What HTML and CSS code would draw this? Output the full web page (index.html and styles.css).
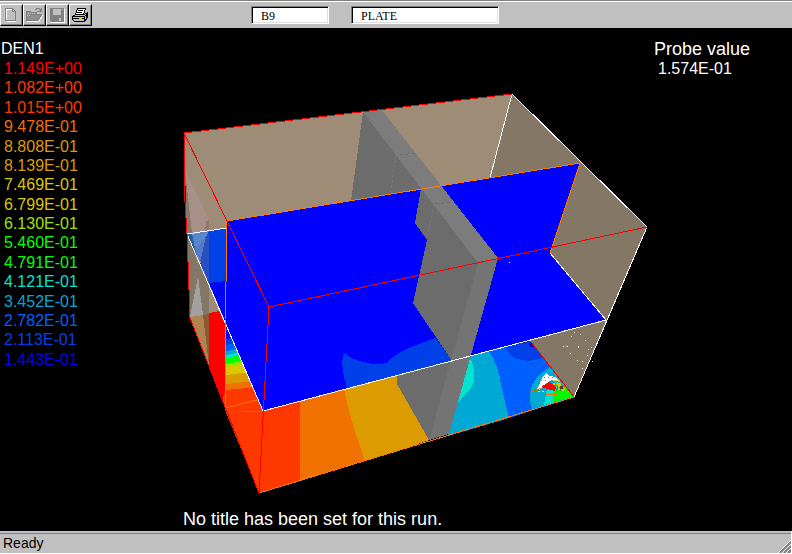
FILE: index.html
```html
<!DOCTYPE html>
<html lang="en">
<head>
<meta charset="utf-8">
<title>DEN1 viewer</title>
<link rel="stylesheet" href="styles.css">
</head>
<body>
<header class="toolbar">
  <div class="buttons">
    <button class="tool" type="button" aria-label="New"><svg viewBox="0 0 18 16"><path fill="#fff" d="M5 2h7v1h1v1h1v11H5v-1h8V5h-3V2z"/><path fill="none" stroke="#808080" d="M3.5 1.5h7l3 3v9h-10zM10.500 1.500v3h3"/><path stroke="#fff" fill="none" d="M4.500 13V2.500H10"/></svg></button>
    <button class="tool" type="button" aria-label="Open"><svg viewBox="0 0 18 16"><path fill="#fff" d="M2 14h12l4-7v1l-4 7H2z"/><path fill="#909090" d="M1 4h4l1 1h6v3h5l-4 6H1z"/><path fill="none" stroke="#808080" d="M1.500 13.500v-9h4l1 1h5v2M1.500 13.500l4-6h11l-4 6zM10 2.500h1v-1h3v1h1v2m-3 0h4V1"/><path stroke="#c0c0c0" stroke-dasharray="1 1" d="M3 6.500h8M2 8.500h3"/></svg></button>
    <button class="tool" type="button" aria-label="Save"><svg viewBox="0 0 18 16"><path fill="#fff" d="M3 15h13V2h1v14H3z"/><path fill="#808080" d="M2 1h14v14H3l-1-1z"/><path fill="#c0c0c0" d="M5 2h8v6H5zM11 11h2v3h-2zM14 2h1v1h-1z"/></svg></button>
    <button class="tool" type="button" aria-label="Print"><svg viewBox="0 0 18 16"><path fill="#fff" stroke="#000" d="M6.500 1.500h8l-2 6h-8z"/><path stroke="#000" d="M7 3.500h5M6 5.500h5"/><path fill="#c0c0c0" stroke="#000" d="M1.500 9.500l3-2h9l3-2v5l-3 4h-10l-2-2zM1.500 9.500h12v5M13.500 9.500l3-3M2 11.500h12"/><path stroke="#e0d000" stroke-width="2" d="M8 12h3"/><path stroke="#000" d="M15.500 7v5"/></svg></button>
  </div>
  <input class="field field-cell" aria-label="Cell" value="B9">
  <input class="field field-object" aria-label="Object" value="PLATE">
</header>

<main class="viewer">
  <section class="legend">
    <h1 class="label">DEN1</h1>
    <ol class="scale">
      <li class="c1">1.149E+00</li><li class="c2">1.082E+00</li><li class="c2">1.015E+00</li><li class="c3">9.478E-01</li>
      <li class="c4">8.808E-01</li><li class="c4">8.139E-01</li><li class="c5">7.469E-01</li><li class="c5">6.799E-01</li>
      <li class="c6">6.130E-01</li><li class="c7">5.460E-01</li><li class="c7">4.791E-01</li><li class="c8">4.121E-01</li>
      <li class="c9">3.452E-01</li><li class="c10">2.782E-01</li><li class="c11">2.113E-01</li><li class="c12">1.443E-01</li>
    </ol>
  </section>

  <figure class="plot">
    <svg class="scene" viewBox="180 90 470 410" shape-rendering="crispEdges" role="img" aria-label="Contour plot in a box">
      <defs><clipPath id="strip"><path d="M226 325L263 411L226 412z"/></clipPath></defs>
      <!-- walls -->
      <path fill="#9f8c77" d="M184 133L512 94L490 178L227 221V330L190 318L187 235z"/>
      <path fill="#857766" d="M512 94L647 227L574 397L530 342L480 250L490 178z"/>
      <!-- floor bands -->
      <path fill="#ff3800" d="M225 390L250 384L263 405L301 401V481L259 493L225 410z"/>
      <path fill="#f07000" d="M300 400L345 389L351 414L365 461L300 481z"/>
      <path fill="#dc9c00" d="M344 389L398 374L430 440L365 461Q350 420 344 389z"/>
      <path fill="#00a8d4" d="M470 357L489 350Q499 367 501 385L509 418L448 436z"/>
      <path fill="#00e4d0" d="M469 357Q475 365 474 380Q473 388 467 392L455 406z"/>
      <path fill="#0060ff" d="M489 351L531 341L574 397L509 418L501 385Q499 367 489 351z"/>
      <path fill="#0040e8" d="M506 347L531 341L543 358Q529 363 518 359Q509 357 506 347z"/>
      <path fill="#0000e8" d="M529 343h3l3 4h-5z"/>
      <path fill="#00a8d4" d="M550 367Q538 374 532 385Q528 397 532 409L574 397z"/>
      <path fill="#00e4d0" d="M546 391L557 386L553 403L544 405L546 395z"/>
      <path fill="#00f800" d="M553 402V393L565 385L574 397z"/>
      <path fill="#fff" d="M537 389L543 376L547 373L549 376L556 377L558 380L550 380L547 383L542 387L539 391z"/>
      <path stroke="#00a8d4" stroke-dasharray="1 3" d="M544 377.500h12M541 380.500h8"/>
      <path fill="#f00" d="M541 387L549 382L553 384L556 388L555 391L547 389z"/>
      <path stroke="#fff" stroke-dasharray="2 2" d="M538 391.500h8M549 380.500h12"/>
      <path stroke="#dcc800" stroke-width="2" stroke-dasharray="2 1" d="M555 380l9 11M553 384h8M558 389h7M559 380v7"/>
      <path stroke="#f07000" stroke-dasharray="3 1" d="M532 390.500h6M539 388.500h4M546 394.500h12M562 386.500h4"/>
      <path stroke="#0a0" stroke-width="2" stroke-dasharray="1 3" d="M534 390h5M556 390h8"/>
      <path fill="#404040" d="M560 386h3v3h-3z"/>
      <!-- left opening -->
      <path fill="#857766" d="M187 234L209 283V367L190 318z"/>
      <path fill="#9f8c77" d="M209 283L221 312L209 314z"/>
      <path fill="#a0a0a0" d="M198 276L190 317L203 315z"/>
      <path fill="#b08450" d="M190 317L203 315L209 352V365z"/>
      <path fill="#8c5c30" d="M203 315L209 314V365z"/>
      <path fill="#f00" d="M209 313L219 311L226 326V407L224 402L209 367z"/>
      <path fill="#ff3800" d="M226 389L222 400L226 408z"/>
      <g clip-path="url(#strip)">
        <path fill="#0000ff" d="M226 320h40v30h-40z"/>
        <path fill="#0040e8" d="M226 339l40-7v90h-40z"/>
        <path fill="#0060ff" d="M226 345l40-8v90h-40z"/>
        <path fill="#00a8d4" d="M226 351l40-8v90h-40z"/>
        <path fill="#00e4d0" d="M226 355l40-8v90h-40z"/>
        <path fill="#00ff00" d="M226 358l40-9v90h-40z"/>
        <path fill="#a0e000" d="M226 364l40-7v90h-40z"/>
        <path fill="#dcc800" d="M226 367l40-7v90h-40z"/>
        <path fill="#dc9c00" d="M226 375l40-5v90h-40z"/>
        <path fill="#f07000" d="M226 384l40-4v90h-40z"/>
        <path fill="#ff3800" d="M226 390l40-4v90h-40z"/>
      </g>
      <!-- cutting plane -->
      <path fill="#0000ff" d="M227 221L580 163L550 253L606 320L263 411L209 283V231L227 228z"/>
      <path fill="#0040e8" d="M187 234L226 228V281L209 283z"/>
      <path fill="#0040e8" d="M345 353Q350 360 368 363Q378 365 386 363Q398 350 436 338L452 361L348 389Q340 370 343 355z"/>
      <!-- inlet tint -->
      <path fill="#a89088" d="M185 170L209 220V232L192 234z"/>
      <path fill="#857766" d="M185 170L192 234H187z"/>
      <path fill="#2060a8" d="M187 234L193 233L196 247V254z"/>
      <path fill="#5888cc" d="M192 234L209 231L203 242L195 248z"/>
      <path fill="#5878c8" d="M195 248L206 237L201 262L197 256z"/>
      <path fill="#2850c0" d="M206 237L209 232V283L200 262z"/>
      <path fill="#94786c" d="M206 221L209 220V231L205 232z"/>
      <path fill="#a08880" d="M197 256L201 262L199 266L196 257z"/>
      <!-- plate -->
      <path fill="#6c6c6c" d="M363 112L351 201L422 189z"/>
      <path fill="#6c6c6c" d="M421 188L415 223L427 240L413 303L452 361L397 376V384L429 440L480 262z"/>
      <path fill="#7c7c7c" d="M363 112L381 109L498 258L478 263z"/>
      <path fill="#747474" d="M478 263L498 258L449 434L429 440z"/>
      <path fill="none" stroke="#777" stroke-dasharray="3 2" d="M396 155L390 195M434 205L427 239"/>
      <path fill="none" stroke="#6c6c6c" stroke-dasharray="3 3" d="M400 155l16-2M435 204l16-2"/>
      <!-- edges -->
      <path class="edge white" d="M512 94L490 178M512 94L647 227L574 397M550 253L606 320L263 411L187 234L227 228"/>
      <path class="edge orange" d="M227 221L580 163L550 253M226 221V282L225 320V408L257 400M259 493L574 397"/>
      <path class="edge red" d="M184 133L512 94"/>
      <path class="edge red" d="M184 133L185 202L187 234L190 318L259 493L269 307L647 227M184 133L227 221L269 307M531 342L574 397"/>
      <g fill="#fff"><path d="M509 262h1v1h-1zM571 336h1v1h-1zM574 332h1v1h-1zM580 334h1v1h-1zM585 340h1v1h-1zM578 346h1v2h-1zM591 347h1v1h-1zM588 349h1v1h-1zM570 353h1v1h-1zM577 360h1v1h-1zM582 361h1v1h-1zM592 361h1v1h-1zM587 355h1v1h-1zM582 368h1v1h-1zM566 346h2v1h-2zM563 346h1v1h-1z"/></g>
    </svg>
    <figcaption class="label">No title has been set for this run.</figcaption>
  </figure>

  <section class="probe label">
    <div>Probe value</div>
    <div class="probe-value">1.574E-01</div>
  </section>
</main>

<footer class="status">
  <span>Ready</span>
  <svg class="grip" viewBox="0 0 13 13"><path stroke="#fff" d="M0 13L13 0M4 13L13 4M8 13L13 8"/><path stroke="#808080" stroke-width="2" d="M2 13L13 2M6 13L13 6M10 13L13 10"/></svg>
</footer>
</body>
</html>
```
FILE: styles.css
```css
* { box-sizing: border-box; }

body {
  margin: 0;
  min-height: 100vh;
  display: flex;
  flex-direction: column;
  background: #000;
  color: #fff;
  font: 16px/20px "Liberation Sans", Arial, sans-serif;
}

.toolbar {
  display: flex;
  align-items: flex-start;
  height: 28px;
  padding-top: 2px;
  background: #c0c0c0;
  border-top: 1px solid #808080;
  box-shadow: inset 0 1px #fff;
}

.buttons { display: flex; width: 251px; padding-top: 1px; }

.tool {
  width: 23px;
  height: 22px;
  padding: 1px;
  background: #c0c0c0;
  border: 1px solid;
  border-color: #fff #000 #000 #fff;
  box-shadow: inset -1px -1px #808080;
}

.tool svg { display: block; width: 18px; height: 16px; shape-rendering: crispEdges; }

.field {
  height: 18px;
  margin: 3px 22px 0 0;
  padding: 2px 0 0 9px;
  border: 1px solid;
  border-color: #808080 #fff #fff #808080;
  border-radius: 0;
  box-shadow: inset 1px 1px #000, inset -1px -1px #dfdfdf;
  background: #fff;
  color: #000;
  font: 12px/14px "Liberation Serif", serif;
}

.field-cell { width: 78px; }
.field-object { width: 148px; }

.viewer {
  flex: 1;
  display: grid;
  grid-template-columns: 180px minmax(0, 1fr) 142px;
}

.legend { padding: 11px 0 0 1px; }

.label { margin: 0; font-size: 18px; font-weight: 400; line-height: 20px; }
h1.label { font-size: 16px; }

.scale {
  display: grid;
  grid-auto-rows: 1fr;
  height: 310px;
  margin: 0;
  padding: 0 0 0 3px;
  list-style: none;
  line-height: 19px;
}

.c1 { color: #f00; }
.c2 { color: #ff3800; }
.c3 { color: #f07000; }
.c4 { color: #dc9c00; }
.c5 { color: #dcc800; }
.c6 { color: #a0e000; }
.c7 { color: #0f0; }
.c8 { color: #00e4d0; }
.c9 { color: #00a8d4; }
.c10 { color: #0060ff; }
.c11 { color: #0040e8; }
.c12 { color: #00f; }

.plot { margin: 0; padding-top: 62px; }
.scene { display: block; width: 100%; }
figcaption { padding: 9px 0 0 3px; }

.edge { fill: none; stroke-width: 1; }
.white { stroke: #fff; }
.orange { stroke: #ff7800; }
.red { stroke: #f00; }

.probe { padding: 11px 0 0 4px; }
.probe-value { padding-left: 4px; font-size: 16px; }

.status {
  display: flex;
  justify-content: space-between;
  align-items: flex-end;
  height: 23px;
  padding-left: 3px;
  background: #c0c0c0;
  border-right: 1px solid #fff;
  border-bottom: 1px solid #fff;
  box-shadow: inset 0 2px #c0c0c0, inset 0 3px #808080;
  color: #000;
  font-size: 14px;
}

.grip { width: 13px; height: 13px; }
```
